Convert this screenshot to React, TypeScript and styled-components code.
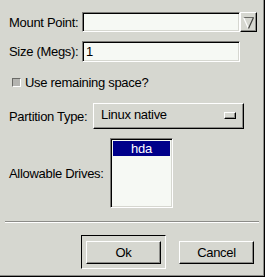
import styled, { createGlobalStyle } from 'styled-components';

const GlobalStyle = createGlobalStyle`
	html, body {
		margin: 0;
		padding: 0;
		background: #d6d7d0;
	}
	body {
		font-family: 'Liberation Sans', Arial, sans-serif;
		font-size: 13px;
		letter-spacing: -0.3px;
		color: #000;
	}
`;

const Dialog = styled.div`
	box-sizing: border-box;
	width: 265px;
	height: 277px;
	padding: 12px 0 0 9px;
	display: flex;
	flex-direction: column;
	background: #d6d7d0;
	border-right: 1px solid #000;
	border-bottom: 1px solid #000;
	box-shadow: inset -1px -1px 0 #8c8c88;
`;

const Row = styled.div<{ $height: number; $top?: number }>`
	display: flex;
	align-items: center;
	height: ${(p) => p.$height}px;
	margin-top: ${(p) => p.$top ?? 0}px;
`;

const Label = styled.span<{ $width: number }>`
	width: ${(p) => p.$width}px;
	flex-shrink: 0;
	white-space: nowrap;
`;

const Entry = styled.div<{ $width: number }>`
	box-sizing: border-box;
	width: ${(p) => p.$width}px;
	height: 100%;
	background: #f6f9f4;
	border-top: 1px solid #7c7c78;
	border-left: 1px solid #7c7c78;
	border-bottom: 1px solid #ffffff;
	border-right: 1px solid #ffffff;
	box-shadow: inset 1px 1px 0 #000, inset -1px -1px 0 #d6d7d0;
	padding-left: 3px;
	display: flex;
	align-items: center;
`;

const Combo = styled.div`
	display: flex;
	height: 100%;
`;

const ArrowButton = styled.div`
	box-sizing: border-box;
	width: 17px;
	height: 100%;
	background: #d6d7d0;
	border-top: 1px solid #fff;
	border-left: 1px solid #fff;
	border-bottom: 1px solid #000;
	border-right: 1px solid #000;
	box-shadow: inset -1px -1px 0 #8c8c88;
	display: flex;
	align-items: center;
	justify-content: center;
`;

const CheckRow = styled.label`
	display: flex;
	align-items: center;
	gap: 4px;
	height: 12px;
	margin-top: 14px;
	padding-left: 3px;
`;

const CheckBox = styled.span`
	box-sizing: border-box;
	width: 9px;
	height: 9px;
	margin-top: 1px;
	background: #b4b4b0;
	border-top: 1px solid #6a6a66;
	border-left: 1px solid #6a6a66;
	border-bottom: 1px solid #fff;
	border-right: 1px solid #fff;
`;

const OptionMenu = styled.div`
	box-sizing: border-box;
	width: 151px;
	height: 100%;
	background: #d6d7d0;
	border-top: 1px solid #fff;
	border-left: 1px solid #fff;
	border-bottom: 1px solid #000;
	border-right: 1px solid #000;
	box-shadow: inset -1px -1px 0 #8c8c88;
	display: flex;
	align-items: center;
	justify-content: space-between;
	padding: 0 7px 2px 7px;
	margin-bottom: 1px;
`;

const Indicator = styled.span`
	box-sizing: border-box;
	width: 12px;
	height: 7px;
	border-top: 1px solid #fff;
	border-left: 1px solid #fff;
	border-bottom: 1px solid #000;
	border-right: 1px solid #000;
	box-shadow: inset -1px -1px 0 #8c8c88;
	margin-top: 2px;
`;

const ListBox = styled.div`
	box-sizing: border-box;
	width: 63px;
	height: 100%;
	background: #f6f9f4;
	border-top: 1px solid #7c7c78;
	border-left: 1px solid #7c7c78;
	border-bottom: 1px solid #fff;
	border-right: 1px solid #fff;
	box-shadow: inset 1px 1px 0 #000, inset -1px -1px 0 #d6d7d0;
	padding: 2px 2px;
`;

const ListItem = styled.div<{ $selected?: boolean }>`
	height: 15px;
	line-height: 15px;
	text-align: center;
	background: ${(p) => (p.$selected ? '#00008a' : 'transparent')};
	color: ${(p) => (p.$selected ? '#fff' : '#000')};
`;

const Separator = styled.div`
	width: 254px;
	margin: 13px 0 0 -4px;
	height: 0;
	border-top: 1px solid #8c8c88;
	border-bottom: 1px solid #fff;
`;

const ButtonRow = styled.div`
	display: flex;
	justify-content: flex-end;
	align-items: flex-start;
	gap: 13px;
	margin-top: 12px;
	padding-right: 10px;
`;

const DefaultFrame = styled.div`
	box-sizing: border-box;
	width: 85px;
	height: 34px;
	padding: 5px 4px 4px 4px;
	border-top: 1px solid #000;
	border-left: 1px solid #000;
	border-bottom: 1px solid #fff;
	border-right: 1px solid #fff;
`;

const Button = styled.button<{ $offset?: number }>`
	box-sizing: border-box;
	width: 75px;
	height: 23px;
	margin-top: ${(p) => p.$offset ?? 0}px;
	padding: 0 0 1px 0;
	font: inherit;
	letter-spacing: inherit;
	color: #000;
	background: #d6d7d0;
	border-top: 1px solid #fff;
	border-left: 1px solid #fff;
	border-bottom: 1px solid #000;
	border-right: 1px solid #000;
	box-shadow: inset -1px -1px 0 #8c8c88;
`;

const DropArrow = () => (
	<svg width="11" height="13" viewBox="0 0 11 13">
		<line x1="0.5" y1="1.5" x2="10.5" y2="1.5" stroke="#6a6a66" />
		<line x1="0.5" y1="1.5" x2="5.5" y2="12.5" stroke="#fff" strokeWidth="1.2" />
		<line x1="10.5" y1="1.5" x2="5.5" y2="12.5" stroke="#3c3c3a" strokeWidth="1.2" />
	</svg>
);

const App = () => {
	return (
		<>
			<GlobalStyle />
			<Dialog>
				<Row $height={20}>
					<Label $width={73}>Mount Point:</Label>
					<Combo>
						<Entry $width={158} />
						<ArrowButton>
							<DropArrow />
						</ArrowButton>
					</Combo>
				</Row>
				<Row $height={21} $top={9}>
					<Label $width={73}>Size (Megs):</Label>
					<Entry $width={158}>1</Entry>
				</Row>
				<CheckRow>
					<CheckBox />
					<span>Use remaining space?</span>
				</CheckRow>
				<Row $height={26} $top={15}>
					<Label $width={84}>Partition Type:</Label>
					<OptionMenu>
						<span>Linux native</span>
						<Indicator />
					</OptionMenu>
				</Row>
				<Row $height={70} $top={9}>
					<Label $width={101}>Allowable Drives:</Label>
					<ListBox>
						<ListItem $selected>hda</ListItem>
					</ListBox>
				</Row>
				<Separator />
				<ButtonRow>
					<DefaultFrame>
						<Button>Ok</Button>
					</DefaultFrame>
					<Button $offset={6}>Cancel</Button>
				</ButtonRow>
			</Dialog>
		</>
	);
};

export default App;
